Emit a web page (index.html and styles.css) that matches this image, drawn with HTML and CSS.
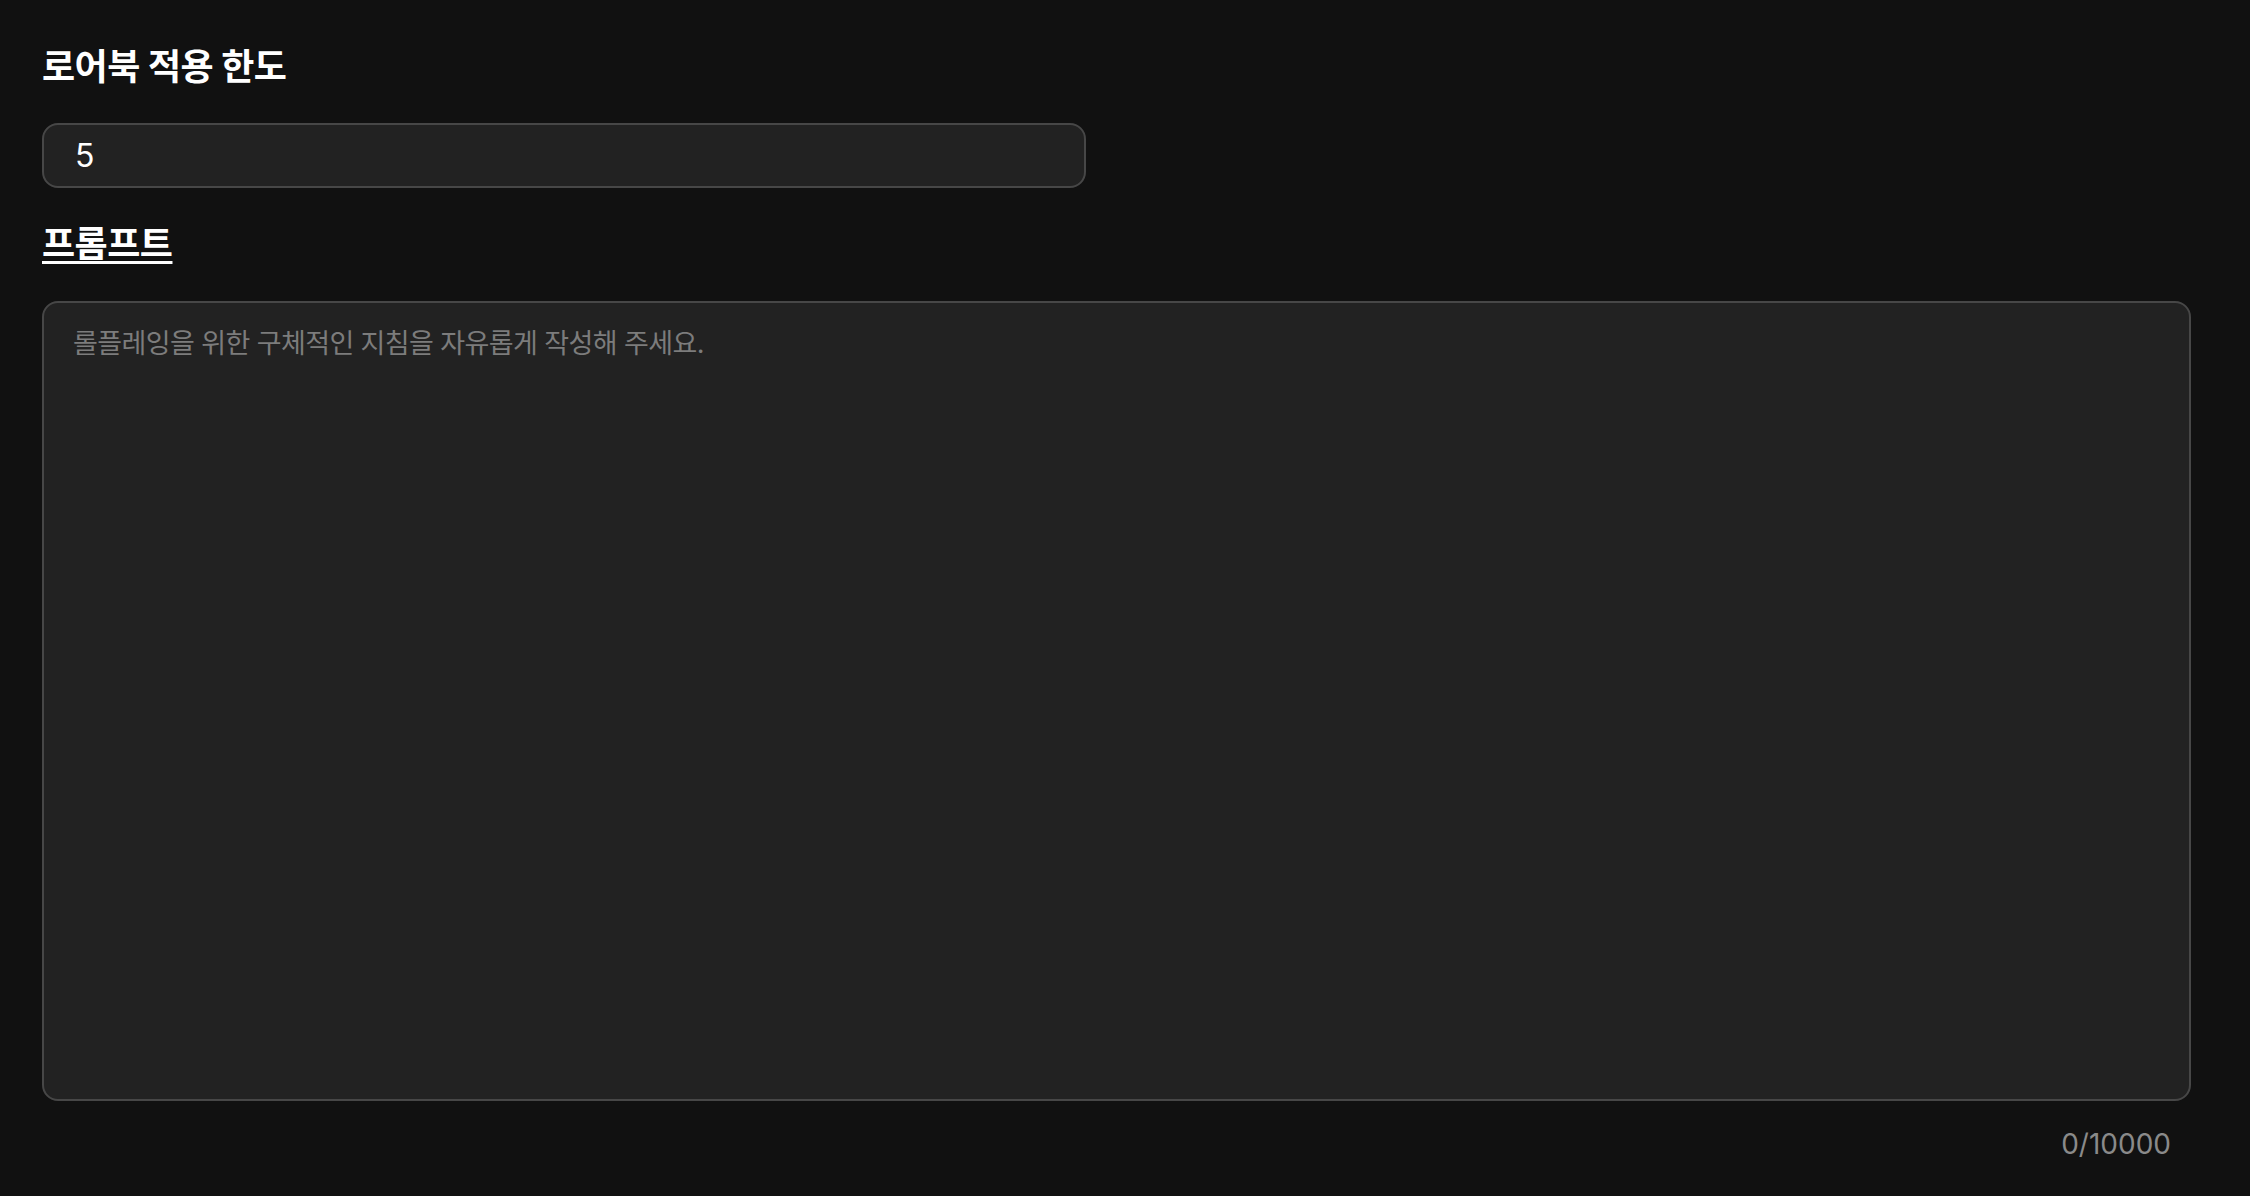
FILE: index.html
```html
<!DOCTYPE html>
<html lang="ko">
<head>
<meta charset="utf-8">
<link rel="stylesheet" href="styles.css">
</head>
<body>
<main class="form">
  <h2 class="title">로어북 적용 한도</h2>
  <div class="field-input"><span class="value">5</span></div>
  <h2 class="label">프롬프트</h2>
  <div class="field-area"><span class="placeholder">롤플레잉을 위한 구체적인 지침을 자유롭게 작성해 주세요.</span></div>
  <div class="counter">0/10000</div>
</main>
</body>
</html>
```

FILE: styles.css
```css
html, body {
  margin: 0;
  padding: 0;
  background: #111111;
}
body {
  font-family: Inter, "Noto Sans CJK KR", sans-serif;
  color: #ffffff;
}
.form {
  display: flex;
  flex-direction: column;
  padding: 43px 0 0 42px;
  width: 2149px;
}
.title {
  margin: 0;
  font-size: 36px;
  font-weight: 700;
  line-height: 48px;
  height: 48px;
  letter-spacing: -0.5px;
}
.field-input {
  box-sizing: border-box;
  margin-top: 32px;
  width: 1044px;
  height: 65px;
  border: 2px solid #474747;
  border-radius: 16px;
  background: #222222;
  display: flex;
  align-items: center;
  padding-left: 31px;
}
.value {
  font-size: 32px;
  color: #ffffff;
}
.label {
  margin: 34px 0 0;
  font-size: 36px;
  font-weight: 700;
  line-height: 44px;
  text-decoration: underline;
  text-underline-offset: 4px;
  text-decoration-thickness: 3px;
  letter-spacing: -0.5px;
}
.field-area {
  box-sizing: border-box;
  margin-top: 35px;
  width: 2149px;
  height: 800px;
  border: 2px solid #474747;
  border-radius: 16px;
  background: #222222;
  padding: 21px 29px;
}
.placeholder {
  font-size: 27px;
  line-height: 40px;
  color: #7c7c7c;
  letter-spacing: -0.6px;
}
.counter {
  align-self: flex-end;
  margin-top: 23px;
  margin-right: 20px;
  font-size: 28px;
  line-height: 40px;
  color: #8a8a8a;
}
```
